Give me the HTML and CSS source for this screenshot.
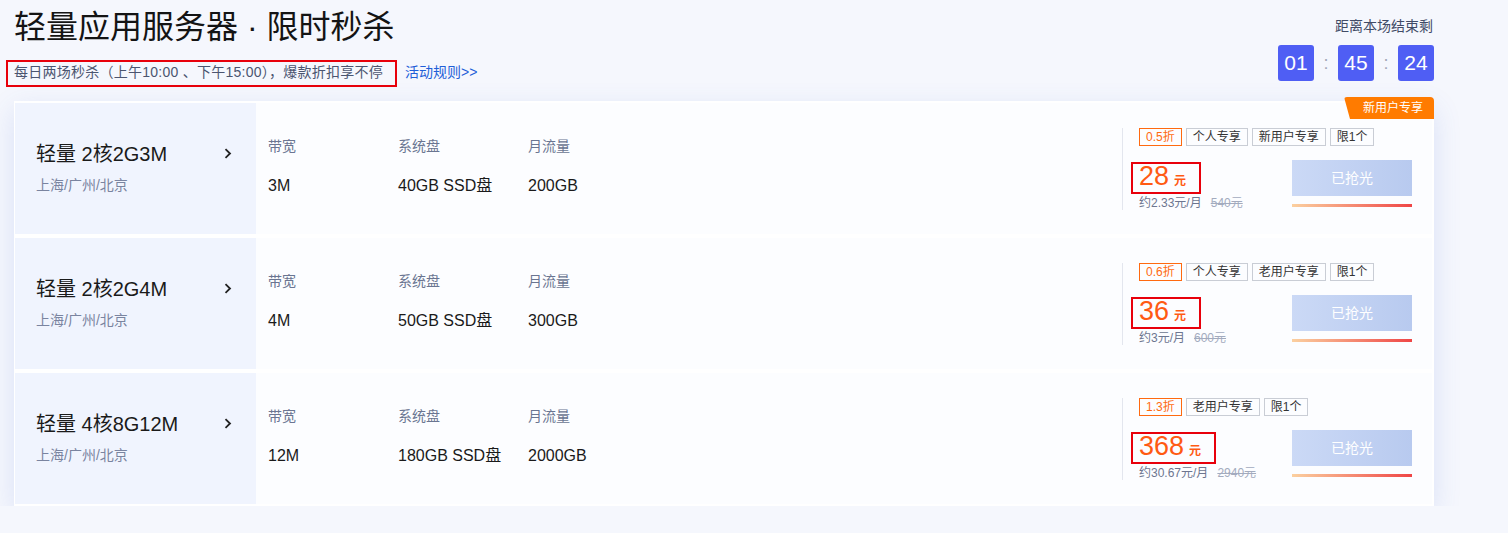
FILE: index.html
```html
<!DOCTYPE html>
<html lang="zh-CN">
<head>
<meta charset="utf-8">
<title>轻量应用服务器 · 限时秒杀</title>
<link rel="stylesheet" href="styles.css">
</head>
<body>
<div class="page">
  <header class="head">
    <div class="head-left">
      <h1 class="title">轻量应用服务器 · 限时秒杀</h1>
      <div class="sub-row">
        <span class="sub-note">每日两场秒杀（上午10:00 、下午15:00），爆款折扣享不停</span>
        <a class="rules" href="#">活动规则&gt;&gt;</a>
      </div>
    </div>
    <div class="countdown">
      <div class="cd-label">距离本场结束剩</div>
      <div class="cd-boxes">
        <span class="cd-box">01</span><span class="cd-colon">:</span><span class="cd-box">45</span><span class="cd-colon">:</span><span class="cd-box">24</span>
      </div>
    </div>
  </header>

  <section class="card">
    <span class="badge">新用户专享</span>

    <div class="row">
      <div class="name-panel">
        <div class="name-text">
          <div class="name">轻量 2核2G3M</div>
          <div class="region">上海/广州/北京</div>
        </div>
        <svg class="chev" width="8" height="11" viewBox="0 0 8 11"><path d="M1.5 1.2 L6 5.5 L1.5 9.8" fill="none" stroke="#222" stroke-width="1.8"/></svg>
      </div>
      <div class="specs">
        <div class="spec"><div class="spec-label">带宽</div><div class="spec-value">3M</div></div>
        <div class="spec"><div class="spec-label">系统盘</div><div class="spec-value">40GB SSD盘</div></div>
        <div class="spec"><div class="spec-label">月流量</div><div class="spec-value">200GB</div></div>
      </div>
      <div class="buy">
        <div class="tags">
          <span class="tag tag-disc">0.5折</span><span class="tag">个人专享</span><span class="tag">新用户专享</span><span class="tag">限1个</span>
        </div>
        <div class="buy-main">
          <div class="price-col">
            <div class="price-box"><span class="price">28</span><span class="unit">元</span></div>
            <div class="price-sub"><span>约2.33元/月</span><s class="orig">540元</s></div>
          </div>
          <div class="btn-col">
            <div class="btn">已抢光</div>
            <div class="bar"></div>
          </div>
        </div>
      </div>
    </div>

    <div class="row">
      <div class="name-panel">
        <div class="name-text">
          <div class="name">轻量 2核2G4M</div>
          <div class="region">上海/广州/北京</div>
        </div>
        <svg class="chev" width="8" height="11" viewBox="0 0 8 11"><path d="M1.5 1.2 L6 5.5 L1.5 9.8" fill="none" stroke="#222" stroke-width="1.8"/></svg>
      </div>
      <div class="specs">
        <div class="spec"><div class="spec-label">带宽</div><div class="spec-value">4M</div></div>
        <div class="spec"><div class="spec-label">系统盘</div><div class="spec-value">50GB SSD盘</div></div>
        <div class="spec"><div class="spec-label">月流量</div><div class="spec-value">300GB</div></div>
      </div>
      <div class="buy">
        <div class="tags">
          <span class="tag tag-disc">0.6折</span><span class="tag">个人专享</span><span class="tag">老用户专享</span><span class="tag">限1个</span>
        </div>
        <div class="buy-main">
          <div class="price-col">
            <div class="price-box"><span class="price">36</span><span class="unit">元</span></div>
            <div class="price-sub"><span>约3元/月</span><s class="orig">600元</s></div>
          </div>
          <div class="btn-col">
            <div class="btn">已抢光</div>
            <div class="bar"></div>
          </div>
        </div>
      </div>
    </div>

    <div class="row">
      <div class="name-panel">
        <div class="name-text">
          <div class="name">轻量 4核8G12M</div>
          <div class="region">上海/广州/北京</div>
        </div>
        <svg class="chev" width="8" height="11" viewBox="0 0 8 11"><path d="M1.5 1.2 L6 5.5 L1.5 9.8" fill="none" stroke="#222" stroke-width="1.8"/></svg>
      </div>
      <div class="specs">
        <div class="spec"><div class="spec-label">带宽</div><div class="spec-value">12M</div></div>
        <div class="spec"><div class="spec-label">系统盘</div><div class="spec-value">180GB SSD盘</div></div>
        <div class="spec"><div class="spec-label">月流量</div><div class="spec-value">2000GB</div></div>
      </div>
      <div class="buy">
        <div class="tags">
          <span class="tag tag-disc">1.3折</span><span class="tag">老用户专享</span><span class="tag">限1个</span>
        </div>
        <div class="buy-main">
          <div class="price-col">
            <div class="price-box"><span class="price">368</span><span class="unit">元</span></div>
            <div class="price-sub"><span>约30.67元/月</span><s class="orig">2940元</s></div>
          </div>
          <div class="btn-col">
            <div class="btn">已抢光</div>
            <div class="bar"></div>
          </div>
        </div>
      </div>
    </div>
  </section>
</div>
</body>
</html>
```

FILE: styles.css
```css
* { box-sizing: border-box; }

html, body {
  margin: 0;
  padding: 0;
  background: #f5f7fd;
  font-family: "Liberation Sans", "Noto Sans CJK SC", sans-serif;
  color: #222;
}

.page {
  width: 1420px;
  margin-left: 14px;
  padding-top: 7px;
}

/* header */
.head {
  display: flex;
  justify-content: space-between;
  align-items: flex-start;
  height: 94px;
}

.title {
  margin: 0;
  font-size: 32px;
  line-height: 40px;
  font-weight: normal;
  color: #141414;
}

.sub-row {
  margin-top: 13px;
  display: flex;
  align-items: center;
}

.sub-note {
  margin-left: -8px;
  height: 27px;
  border: 2px solid #e8000b;
  padding: 0 12px 0 6px;
  font-size: 14px;
  line-height: 21px;
  letter-spacing: 0.25px;
  color: #4b5570;
}

.rules {
  margin-left: 8px;
  font-size: 14px;
  line-height: 20px;
  color: #1f5fd8;
  text-decoration: none;
  margin-top: -4px;
}

.countdown {
  padding-top: 9px;
  display: flex;
  flex-direction: column;
  align-items: flex-end;
}

.cd-label {
  font-size: 14px;
  line-height: 20px;
  color: #414b66;
  margin-right: 1px;
}

.cd-boxes {
  margin-top: 9px;
  display: flex;
  align-items: center;
}

.cd-box {
  width: 36px;
  height: 36px;
  border-radius: 3px;
  background: #4f5ef4;
  color: #fff;
  font-size: 21px;
  line-height: 36px;
  text-align: center;
}

.cd-colon {
  width: 24px;
  text-align: center;
  color: #a3a9b8;
  font-size: 18px;
  line-height: 36px;
}

/* card */
.card {
  position: relative;
  background: #fff;
  padding: 2px 2px 2px 1px;
  display: flex;
  flex-direction: column;
  gap: 4px;
  box-shadow: 0 8px 26px rgba(70, 100, 210, 0.15);
}

.badge {
  position: absolute;
  top: -4px;
  right: 0;
  width: 90px;
  height: 22px;
  background: #ff7b00;
  color: #fff;
  font-size: 12px;
  line-height: 22px;
  text-align: center;
  padding-left: 8px;
  border-radius: 3px 4px 0 0;
  clip-path: polygon(0 0, 100% 0, 100% 100%, 6px 100%);
}

.row {
  display: flex;
  align-items: center;
  height: 131px;
  background: #fcfdff;
}

.name-panel {
  width: 241px;
  height: 100%;
  background: #f0f4fe;
  display: flex;
  align-items: center;
  justify-content: space-between;
  padding: 0 24px 0 21px;
}

.name-text {
  display: flex;
  flex-direction: column;
  gap: 7px;
  margin-bottom: 3px;
}

.name {
  font-size: 20px;
  line-height: 28px;
  color: #1a1a1a;
}

.region {
  font-size: 14px;
  line-height: 20px;
  color: #7a84a0;
}

.chev {
  display: block;
  margin-top: -30px;
}

.specs {
  display: flex;
  padding-left: 12px;
  margin-top: -5px;
}

.spec {
  width: 130px;
}

.spec-label {
  font-size: 14px;
  line-height: 20px;
  color: #6a7591;
}

.spec-value {
  margin-top: 19px;
  font-size: 16px;
  line-height: 22px;
  color: #1a1a1a;
}

/* buy section */
.buy {
  margin-left: auto;
  width: 310px;
  height: 82px;
  border-left: 1px solid #e3e6ee;
  padding: 0 20px 0 16px;
}

.tags {
  display: flex;
  gap: 4px;
}

.tag {
  height: 18px;
  border: 1px solid #c9cdd5;
  padding: 0 6px;
  font-size: 12px;
  line-height: 16px;
  color: #333;
}

.tag-disc {
  border-color: #ff6a10;
  color: #ff6a10;
}

.buy-main {
  margin-top: 14px;
  display: flex;
  justify-content: space-between;
  align-items: flex-start;
}

.price-col {
  padding-top: 2px;
}

.price-box {
  margin-left: -8px;
  height: 32px;
  border: 2px solid #e8000b;
  padding: 0 13px 0 6px;
  display: flex;
  align-items: baseline;
  gap: 5px;
  width: max-content;
}

.price {
  font-size: 27px;
  line-height: 22px;
  padding-top: 1px;
  color: #ff5a12;
}

.unit {
  font-size: 12px;
  font-weight: bold;
  color: #ff5a12;
}

.price-sub {
  margin-top: 2px;
  display: flex;
  gap: 9px;
  font-size: 12px;
  line-height: 14px;
  color: #6d7690;
}

.orig {
  color: #a3abbe;
}

.btn-col {
  width: 120px;
}

.btn {
  height: 36px;
  background: linear-gradient(90deg, #cbd9f6, #b8caef);
  color: #fff;
  font-size: 14px;
  line-height: 36px;
  text-align: center;
}

.bar {
  margin-top: 8px;
  height: 3px;
  background: linear-gradient(90deg, #fbd0a0, #ef4646);
}
```
